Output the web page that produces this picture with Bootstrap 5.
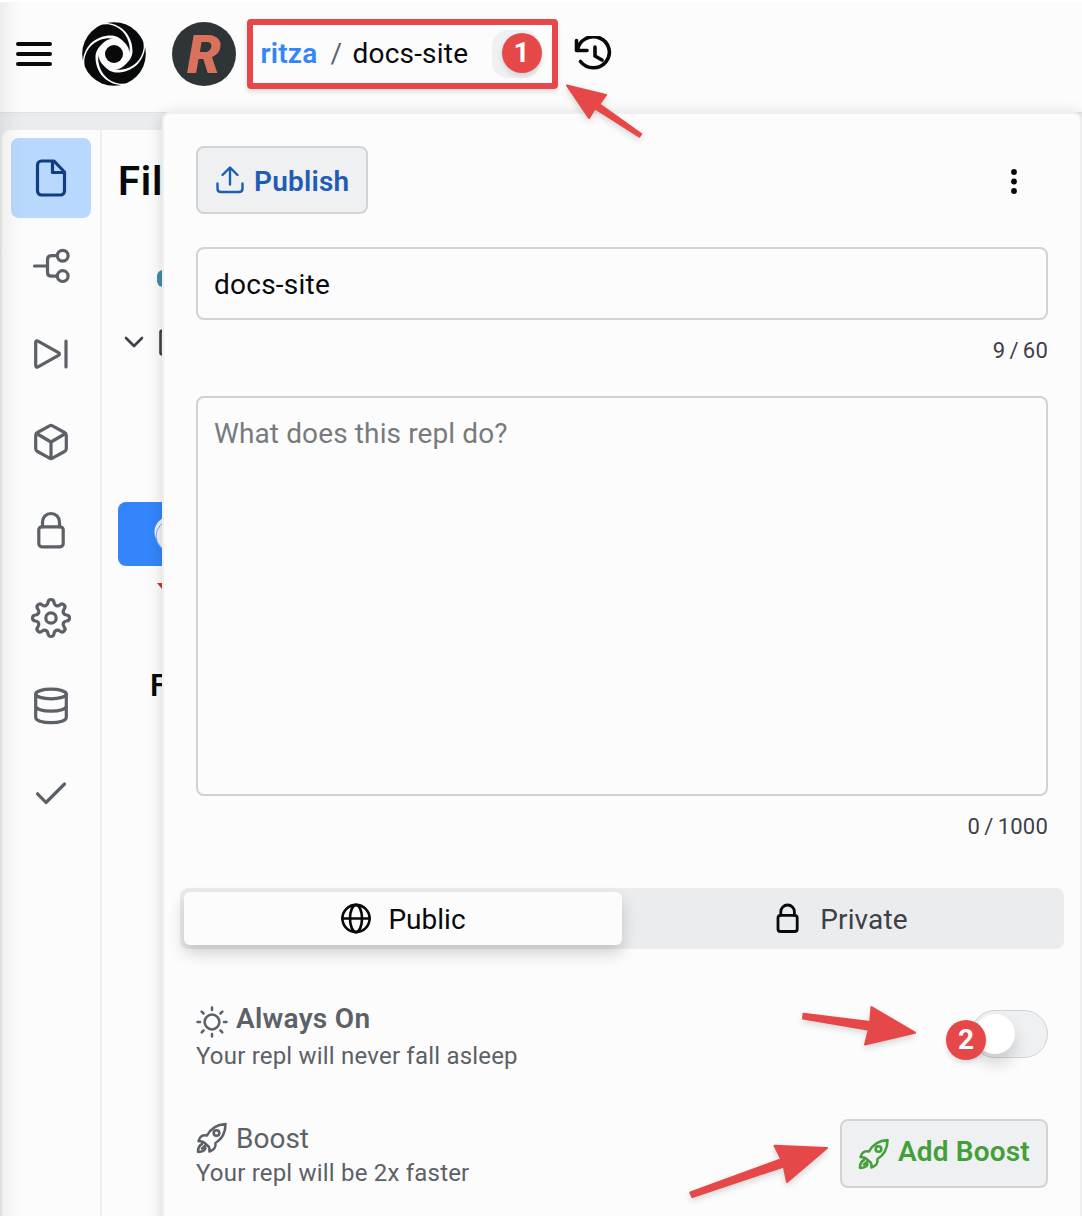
<!DOCTYPE html>
<html lang="en">
<head>
<meta charset="utf-8">
<title>docs-site</title>
<link href="https://cdn.jsdelivr.net/npm/bootstrap@5.3.0/dist/css/bootstrap.min.css" rel="stylesheet">
<style>
body{width:1082px;height:1216px;overflow:hidden;background:#ebeced;font-family:Roboto,"Liberation Sans",sans-serif;font-size:28px;line-height:32px;color:#07090b}
svg{display:block;flex:none}
.ln{fill:none;stroke:currentColor;stroke-width:3.2;stroke-linecap:round;stroke-linejoin:round}
.topbar{height:113px;padding:0 0 7px 16px;background:#fcfcfc;border-top:2px solid #fff;border-bottom:1px solid #e1e2e4}
.logo{margin:0 -4px 0 26px}
.avatar{width:64px;height:64px;margin-left:26px;background:#2f3536;color:#da715d;font:italic 900 54px Roboto,sans-serif;line-height:65px}
.crumb{width:311px;height:70px;margin:1px 0 0 10.5px;padding:0 8px;border:6px solid #e64849;border-radius:4px;box-shadow:0 3px 5px rgba(0,0,0,.12)}
.crumb .owner{color:#3485fb;font-weight:600;letter-spacing:.2px;width:70px}
.crumb .sep{color:#5f646b;width:22px;letter-spacing:0}
.crumb .repl{width:139px;letter-spacing:.2px}
.pill{width:48px;height:48px;border-radius:16px;background:#eff0f2}
.dot{width:40px;height:40px;border-radius:50%;background:#e64849;color:#fff;font-weight:700;line-height:40px;text-align:center;box-shadow:0 3px 5px rgba(0,0,0,.12)}
.dot1{position:absolute;left:10px;top:3px}
.dot2{position:absolute;left:-26px;top:9px}
.history{margin:3px 0 0 16px}
.work{height:1103px;margin:17px 0 0 2px}
.side{width:100px;padding:8px 0 0 9px;background:#fcfcfc;border-right:2px solid #f0f0f1;border-radius:8px 0 0 0;color:#5c6067}
.tool{width:80px;height:80px;margin-bottom:8px;border-radius:8px;cursor:pointer}
.tool.on{background:#b9d8fd;color:#0f3f82}
.files{width:980px;background:#fcfcfc;padding-left:16px}
.files h1{height:116px;margin:0;padding-top:28px;font-size:40px;line-height:48px;font-weight:600;letter-spacing:.8px}
.frow{height:64px;border-radius:8px}
.frow.on{background:#3485fb}
.pop{position:absolute;left:162px;top:112px;width:920px;height:1130px;background:#fcfcfc;border:2px solid #efeff0;border-radius:8px;padding:32px 32px 0;box-shadow:0 2px 16px rgba(0,0,0,.15)}
.gbtn{border:2px solid #d2d3d5;border-radius:8px;background:#eff0f2;font-weight:600}
.publish{width:172px;height:68px;padding-left:18px;color:#1f5cb5;letter-spacing:.2px}
.field{border:2px solid #d2d2d3;border-radius:8px;background:#fcfcfc;padding:0 16px;font-size:28px;color:#07090b;width:852px;letter-spacing:.25px}
.field::placeholder{color:#777b7e;opacity:1;letter-spacing:.12px}
.name{height:73px;margin-top:33px;padding-top:2px}
.desc{height:400px;padding-top:20px;resize:none;line-height:32px}
.count{font-size:22px;line-height:28px;color:#3c4047;text-align:right;letter-spacing:.2px;word-spacing:-1.5px}
.seg{width:884px;height:61px;margin:47px 0 0 -16px;padding:4px;border-radius:8px;background:#ebeced}
.seg>div{height:53px;border-radius:6px}
.seg span{padding-top:2px}
.seg .act{width:438px;background:#fcfcfc;box-shadow:0 8px 16px rgba(0,0,0,.18)}
.opt{color:#5c6067}
.subt{font-size:24px;line-height:32px;white-space:nowrap;letter-spacing:.2px}
.toggle{position:relative;width:77px;height:48px;border-radius:24px;border:1px solid #d2d3d5;background:#eff0f2}
.knob{width:40px;height:40px;margin:3px;border-radius:50%;background:#fff;box-shadow:0 10px 16px rgba(0,0,0,.16)}
.boost{width:208px;height:69px;padding-left:16px;color:#43a038;letter-spacing:.15px}
.edge{position:absolute;left:0;top:2px;width:26px;height:1214px;background:linear-gradient(90deg,rgba(0,0,0,.06),rgba(0,0,0,.01) 60%,transparent);pointer-events:none}
.marks{position:absolute;left:0;top:0;pointer-events:none;filter:drop-shadow(0 3px 3px rgba(0,0,0,.15))}
</style>
<script src="https://cdn.jsdelivr.net/npm/bootstrap@5.3.0/dist/js/bootstrap.bundle.min.js"></script>
</head>
<body class="position-relative">
<svg width="0" height="0" class="position-absolute">
<defs>
<path id="tooth" d="M-5.1-12.4C-3.6-13-3.2-14-3-15.5C-2.7-19.5 2.7-19.5 3-15.5C3.2-14 3.6-13 5.1-12.4"/>
<path id="arm" d="M-13-33L-6-31C8-29.500 19-18 18.500-2C18 4 14 9 10 11L10 7C14 3 16.500-2 15.500-8C14-19 6-28-6-29.700L-13-29.500Z"/>
<symbol id="rocket" viewBox="0 0 32 32"><g class="ln" style="stroke-width:2.600"><path d="M11 13.500C14 8 20 2.500 29.500 2C29.500 12 26 17 19.500 21C20 26 18 28 13.500 29.500C13.500 27 13.500 25 12.500 24.500L8 20.500C6.500 19.500 5 19.500 2.500 19C3.500 15 6.500 12.500 11 13.500"/><circle cx="20.500" cy="11" r="2.800"/><path d="M6 22C3 23.500 2 26 2 29.800C5.500 30 8 29.500 9.500 26.500M6 26.500L9 24"/></g></symbol>
</defs>
</svg>

<header class="topbar d-flex align-items-center">
<svg class="ln" width="36" height="36" style="stroke-width:4"><path d="M2 8H34M2 18H34M2 28H34"/></svg>
<svg class="logo" width="72" height="72" viewBox="-36 -36 72 72"><circle r="31.800" fill="#07090b"/><g fill="#fcfcfc"><use href="#arm"/><use href="#arm" transform="rotate(90)"/><use href="#arm" transform="rotate(180)"/><use href="#arm" transform="rotate(270)"/><circle r="15.500"/></g><circle r="9" fill="#07090b"/></svg>
<div class="avatar rounded-circle text-center">R</div>
<div class="crumb d-flex align-items-center">
<span class="owner">ritza</span><span class="sep">/</span><span class="repl">docs-site</span>
<div class="pill position-relative"><div class="dot dot1">1</div></div>
</div>
<svg class="history ln" width="40" height="38" style="stroke-width:3.600"><path d="M2.500 4.500V14.500H13M3.500 14A16 15.500 0 1 1 6.500 25.500M21 11V20L28 24"/></svg>
</header>

<main class="work d-flex">
<nav class="side flex-shrink-0">
<div class="tool on"><svg class="ln" width="80" height="80"><path d="M30.500 23H43L53.500 34V53a4 4 0 0 1-4 4h-19a4 4 0 0 1-4-4v-26a4 4 0 0 1 4-4ZM41.500 23V34.500H53.500"/></svg></div>
<div class="tool"><svg class="ln" width="80" height="80"><path d="M23.500 40H36.500M46 29.700H40.500q-4 0-4 4v12.500q0 4 4 4H46"/><circle cx="51.700" cy="29.700" r="5.400"/><circle cx="51.700" cy="50.100" r="5.400"/></svg></div>
<div class="tool"><svg class="ln" width="80" height="80"><path d="M24.700 28.500c0-1.500 1-2 2.300-1.300L47.500 38.700c1.300.8 1.300 1.800 0 2.600L27 52.800c-1.300.7-2.300.2-2.300-1.300ZM55 27V53"/></svg></div>
<div class="tool"><svg class="ln" width="80" height="80"><path d="M38.500 23.800q1.500-.8 3 0L53.500 30.500q1.800 1 1.800 3V46.500q0 2-1.800 3L41.500 56.200q-1.500.8-3 0L26.500 49.500q-1.800-1-1.800-3V33.500q0-2 1.800-3ZM25.500 31.500L40 40L54.500 31.500M40 40V56"/></svg></div>
<div class="tool"><svg class="ln" width="80" height="80"><rect x="27.800" y="36.800" width="24.400" height="20" rx="3"/><path d="M31.500 36.800V32a8.500 8.500 0 0 1 17 0V36.800"/></svg></div>
<div class="tool"><svg class="ln" width="80" height="80"><g transform="translate(40 40)"><use href="#tooth"/><use href="#tooth" transform="rotate(45)"/><use href="#tooth" transform="rotate(90)"/><use href="#tooth" transform="rotate(135)"/><use href="#tooth" transform="rotate(180)"/><use href="#tooth" transform="rotate(225)"/><use href="#tooth" transform="rotate(270)"/><use href="#tooth" transform="rotate(315)"/><circle r="5.200"/></g></svg></div>
<div class="tool"><svg class="ln" width="80" height="80"><ellipse cx="40" cy="28" rx="15.300" ry="4.800"/><path d="M24.700 28V51.500c0 3 6.500 5.200 15.300 5.200s15.300-2.200 15.300-5.200V28M24.700 40c0 3 6.500 5.200 15.300 5.200s15.300-2.200 15.300-5.200"/></svg></div>
<div class="tool"><svg class="ln" width="80" height="80"><path d="M26.500 39.800L35 48.500L53.500 30"/></svg></div>
</nav>
<section class="files">
<h1>Files</h1>
<div class="frow"><svg width="60" height="64"><rect x="39" y="24" width="30" height="17" rx="6" fill="#3f8fa9"/></svg></div>
<div class="frow"><svg class="ln" width="60" height="64" style="stroke-width:2.600;color:#3c4047"><path d="M8 28L16 36L24 28"/><rect x="42.500" y="20.500" width="30" height="24" rx="2"/></svg></div>
<div class="frow"></div>
<div class="frow"></div>
<div class="frow on"><svg width="60" height="64"><circle cx="52" cy="30" r="15.500" fill="#f4f5f6"/><circle cx="54" cy="34" r="16" fill="#eff0f2" stroke="#3485fb" stroke-width=".7"/></svg></div>
<div class="frow"><svg width="60" height="64"><path d="M39 17H60V42Z" fill="#c8322d"/></svg></div>
<div style="padding:40px 0 0 32px;font-size:31px;font-weight:600">F</div>
</section>
</main>

<section class="pop">
<div class="d-flex justify-content-between align-items-center">
<div class="gbtn publish d-flex align-items-center"><svg class="ln" width="28" height="30" style="stroke-width:2.400"><path d="M14 19.500V3M6.500 10L14 2.500L21.500 10M1.500 18.500V23.500q0 3.500 3.500 3.500H23q3.500 0 3.500-3.500V18.500"/></svg><span style="margin:3px 0 0 10px">Publish</span></div>
<svg width="8" height="28" style="margin:1px 30px 0 0" fill="#07090b"><circle cx="4" cy="5" r="2.900"/><circle cx="4" cy="14.500" r="2.900"/><circle cx="4" cy="24" r="2.900"/></svg>
</div>
<input class="field name d-block" value="docs-site">
<div class="count" style="margin:17px 0 31px">9 / 60</div>
<textarea class="field desc d-block" placeholder="What does this repl do?"></textarea>
<div class="count" style="margin-top:17px">0 / 1000</div>
<div class="seg d-flex">
<div class="act d-flex align-items-center justify-content-center"><svg class="ln" width="32" height="32" style="stroke-width:2.600"><circle cx="16" cy="15.500" r="13.600"/><ellipse cx="16" cy="15.500" rx="6" ry="13.600"/><path d="M2.500 15.500H29.500"/></svg><span style="margin-left:16px">Public</span></div>
<div class="flex-fill d-flex align-items-center justify-content-center"><svg class="ln" width="26" height="32" style="stroke-width:2.800"><rect x="4" y="12.300" width="19.200" height="16.200" rx="2.500"/><path d="M6.800 12.300V8.800a6.800 6.800 0 0 1 13.600 0V12.300"/></svg><span style="margin-left:20px;color:#3c4047;letter-spacing:.1px">Private</span></div>
</div>
<div class="opt d-flex justify-content-between" style="margin-top:53px">
<div><div class="d-flex" style="height:38px"><svg class="ln" width="32" height="32" style="margin-top:4px;stroke-width:2.500"><circle cx="16" cy="16" r="7.400"/><path d="M16 1.500V4M16 28V30.500M1.500 16H4M28 16H30.500M5.700 5.700L7.500 7.500M24.500 24.500L26.300 26.300M26.300 5.700L24.500 7.500M7.500 24.500L5.700 26.300"/></svg><span style="margin:1px 0 0 8px;font-weight:600;letter-spacing:.3px">Always On</span></div>
<div class="subt">Your repl will never fall asleep</div></div>
<div class="toggle" style="margin-top:8px"><div class="knob"></div><div class="dot dot2">2</div></div>
</div>
<div class="opt d-flex justify-content-between" style="margin-top:47px">
<div style="padding-top:3px"><div class="d-flex" style="height:35px"><svg width="32" height="32"><use href="#rocket"/></svg><span style="margin:1px 0 0 8px">Boost</span></div>
<div class="subt">Your repl will be 2x faster</div></div>
<div class="gbtn boost d-flex align-items-center"><svg width="32" height="32"><use href="#rocket"/></svg><span style="margin:-4px 0 0 8px;white-space:nowrap">Add Boost</span></div>
</div>
</section>

<div class="edge"></div>
<svg class="marks" width="1082" height="1216" fill="#e64849" stroke="#e64849" stroke-width="2" stroke-linejoin="round">
<path d="M567 85.500L606 95L599.500 104.300L641.300 134L639.300 136.700L595 108.300L589 118Z"/>
<path d="M915 1032.700L871.500 1007L870.200 1022L803.500 1013.700L803 1018.500L868.800 1029.800L865 1044.500Z"/>
<path d="M827 1148L774.500 1145.700L781.300 1159.200L690.300 1192.500L692.300 1197L783.800 1166.500L787 1182Z"/>
</svg>
</body>
</html>
